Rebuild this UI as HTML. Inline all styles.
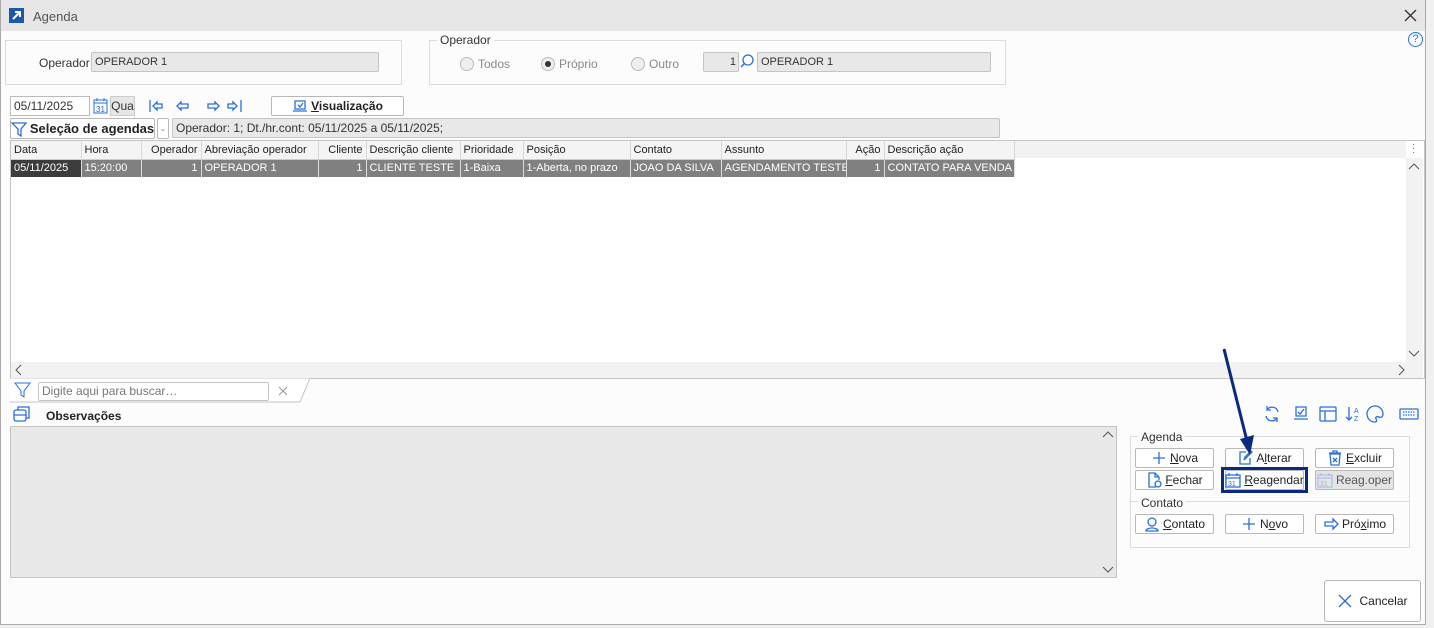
<!DOCTYPE html>
<html><head><meta charset="utf-8"><style>
*{box-sizing:border-box;margin:0;padding:0}
body{width:1434px;height:628px;background:#f0f0f0;font-family:"Liberation Sans",sans-serif;font-size:12px;color:#333;position:relative;overflow:hidden}
.a{position:absolute}
.win{left:0;top:0;width:1426px;height:625px;background:#fcfcfc;border:1px solid #aaa;border-top:none}
.title{left:1px;top:0;width:1424px;height:31px;background:#e6e6e6}
.fld{background:#e8e8e8;border:1px solid #c4c4c4;border-radius:2px;padding-left:3px;line-height:18px;font-size:11px;color:#333;white-space:nowrap;overflow:hidden}
.gb{border:1px solid #dcdcdc}
.btn{background:#fff;border:1px solid #b8b8b8;border-radius:2px;font-size:12px;color:#222;display:flex;align-items:center;justify-content:center;gap:3px;white-space:nowrap}
.btn svg{flex:none}
.rad{width:14px;height:14px;border-radius:50%;border:1px solid #bbb;background:#eee}
table{border-collapse:collapse;font-size:11px;table-layout:fixed;width:1003px}
td{height:18px;padding:0 3px;white-space:nowrap;overflow:hidden;border-right:1px solid #d8d8d8}
.h td{background:#f4f4f4;color:#222;border-bottom:1px solid #ccc}
.r td{background:#808080;color:#fff;border-right:1px solid #ddd}
.rt{text-align:right}
u{text-decoration:underline}
.ic{stroke:#2a6fdb;fill:none;stroke-width:1.3}
</style></head><body>
<div class="a win"></div>
<div class="a title"></div>
<div class="a" style="left:9px;top:8px;width:15px;height:15px;background:#1a5aa8"><svg width="15" height="15"><path d="M4 11L11 4M6 4H11V9" stroke="#fff" stroke-width="2" fill="none"/></svg></div>
<div class="a" style="left:33px;top:9px;font-size:13px;color:#555">Agenda</div>
<svg class="a" style="left:1404px;top:9px" width="13" height="13"><path d="M1 1L12 12M12 1L1 12" stroke="#333" stroke-width="1.3"/></svg>
<div class="a" style="left:1408px;top:32px;width:15px;height:15px;border:1.5px solid #2a6fdb;border-radius:50%;color:#2a6fdb;font-size:11px;text-align:center;line-height:12px">?</div>

<div class="a gb" style="left:5px;top:40px;width:397px;height:45px"></div>
<div class="a" style="left:39px;top:56px;font-size:12px">Operador</div>
<div class="a fld" style="left:91px;top:52px;width:288px;height:20px">OPERADOR 1</div>

<div class="a gb" style="left:429px;top:40px;width:577px;height:45px"></div>
<div class="a" style="left:437px;top:33px;background:#fcfcfc;padding:0 3px;font-size:12px">Operador</div>
<div class="a rad" style="left:460px;top:57px"></div><div class="a" style="left:478px;top:57px;color:#888">Todos</div>
<div class="a rad" style="left:541px;top:57px"><div style="width:6px;height:6px;background:#333;border-radius:50%;margin:3px"></div></div><div class="a" style="left:559px;top:57px;color:#888">Próprio</div>
<div class="a rad" style="left:631px;top:57px"></div><div class="a" style="left:649px;top:57px;color:#888">Outro</div>
<div class="a fld" style="left:703px;top:52px;width:36px;height:20px;text-align:right;padding-right:2px">1</div>
<svg class="a" style="left:740px;top:54px" width="15" height="15"><circle cx="8" cy="6" r="5" stroke="#2a6fdb" stroke-width="1.3" fill="none"/><path d="M4.5 9.5L1 13" stroke="#2a6fdb" stroke-width="1.5"/></svg>
<div class="a fld" style="left:757px;top:52px;width:234px;height:20px">OPERADOR 1</div>

<div class="a" style="left:10px;top:96px;width:80px;height:20px;background:#fff;border:1px solid #bbb;padding-left:3px;line-height:18px;font-size:12px">05/11/2025</div>
<svg class="a" style="left:93px;top:97px" width="16" height="18"><rect x="1" y="3" width="13" height="13" fill="none" stroke="#2a6fdb"/><path d="M1 6H14M4 1V4M11 1V4" stroke="#2a6fdb"/><text x="3" y="15" font-size="8" fill="#2a6fdb" font-family="Liberation Sans">31</text></svg>
<div class="a" style="left:110px;top:96px;width:25px;height:20px;background:#e6e6e6;border:1px solid #ccc;font-size:12px;line-height:18px;text-align:center">Qua</div>
<svg class="a" style="left:148px;top:98px" width="100" height="16">
<g class="ic"><path d="M2 2V14M5 8L9 4V6H14V10H9V12Z"/><path d="M29 8L33 4V6H40V10H33V12Z"/><path d="M71 8L67 4V6H60V10H67V12Z"/><path d="M89 8L85 4V6H80V10H85V12ZM93 2V14"/></g></svg>
<div class="a btn" style="left:271px;top:96px;width:133px;height:20px;font-weight:bold"><svg width="16" height="14"><path class="ic" d="M3 2H13V10H3ZM1 12H15M6 6L8 8L11 4"/></svg><span><u>V</u>isualização</span></div>

<div class="a btn" style="left:10px;top:118px;width:145px;height:21px;font-weight:bold;font-size:13px"><svg width="16" height="16"><path class="ic" d="M1 2H15L10 8V15L7 13V8Z"/></svg>Seleção de agendas</div>
<div class="a btn" style="left:157px;top:118px;width:12px;height:21px;font-size:8px;color:#888">⌄</div>
<div class="a fld" style="left:172px;top:118px;width:828px;height:20px;font-size:12px">Operador: 1; Dt./hr.cont: 05/11/2025 a 05/11/2025;</div>

<div class="a" style="left:10px;top:140px;width:1415px;height:239px;background:#fff;border:1px solid #c4c4c4"></div>
<div class="a" style="left:11px;top:141px;width:1395px;height:17px;background:#f2f2f2"></div>
<table class="a" style="left:11px;top:141px">
<colgroup><col style="width:70px"><col style="width:60px"><col style="width:60px"><col style="width:117px"><col style="width:48px"><col style="width:94px"><col style="width:63px"><col style="width:107px"><col style="width:91px"><col style="width:125px"><col style="width:38px"><col style="width:130px"></colgroup>
<tr class="h"><td>Data</td><td>Hora</td><td class="rt">Operador</td><td>Abreviação operador</td><td class="rt">Cliente</td><td>Descrição cliente</td><td>Prioridade</td><td>Posição</td><td>Contato</td><td>Assunto</td><td class="rt">Ação</td><td>Descrição ação</td></tr>
<tr class="r"><td style="background:#3c3c3c">05/11/2025</td><td>15:20:00</td><td class="rt">1</td><td>OPERADOR 1</td><td class="rt">1</td><td>CLIENTE TESTE</td><td>1-Baixa</td><td>1-Aberta, no prazo</td><td>JOAO DA SILVA</td><td>AGENDAMENTO TESTE</td><td class="rt">1</td><td>CONTATO PARA VENDA</td></tr>
</table>
<div class="a" style="left:1406px;top:158px;width:17px;height:204px;background:#f2f2f2"></div>
<div class="a" style="left:1412px;top:143px;color:#2a6fdb;font-size:10px;line-height:4px">·<br>·<br>·</div>
<svg class="a" style="left:1407px;top:162px" width="14" height="10"><path d="M2 7L7 2L12 7" stroke="#555" fill="none"/></svg>
<svg class="a" style="left:1407px;top:348px" width="14" height="10"><path d="M2 3L7 8L12 3" stroke="#555" fill="none"/></svg>
<div class="a" style="left:11px;top:362px;width:1412px;height:16px;background:#f2f2f2"></div>
<svg class="a" style="left:14px;top:364px" width="10" height="12"><path d="M7 1L2 6L7 11" stroke="#555" fill="none"/></svg>
<svg class="a" style="left:1396px;top:364px" width="10" height="12"><path d="M3 1L8 6L3 11" stroke="#555" fill="none"/></svg>

<svg class="a" style="left:10px;top:378px" width="300" height="25"><path d="M0 0H300L290 24H0" fill="#fff" stroke="#c4c4c4"/><path d="M5 5H20L14 13V19L11 17V13Z" stroke="#2a6fdb" fill="none"/></svg>
<div class="a" style="left:38px;top:382px;width:231px;height:19px;background:#fff;border:1px solid #c4c4c4;border-radius:2px;padding-left:3px;line-height:17px;color:#777;font-size:12px">Digite aqui para buscar…</div>
<svg class="a" style="left:278px;top:386px" width="10" height="10"><path d="M1 1L9 9M9 1L1 9" stroke="#999"/></svg>

<svg class="a" style="left:13px;top:405px" width="18" height="18"><rect x="1" y="5" width="12" height="11" rx="2" stroke="#2a6fdb" fill="none" stroke-width="1.3"/><path d="M1 10H13M5 5V2H16V13H13" stroke="#2a6fdb" fill="none" stroke-width="1.3"/></svg>
<div class="a" style="left:46px;top:409px;font-weight:bold;font-size:12px;color:#222">Observações</div>
<div class="a" style="left:10px;top:426px;width:1107px;height:152px;background:#e8e8e8;border:1px solid #c4c4c4"></div>
<svg class="a" style="left:1101px;top:430px" width="14" height="10"><path d="M2 7L7 2L12 7" stroke="#555" fill="none"/></svg>
<svg class="a" style="left:1101px;top:564px" width="14" height="10"><path d="M2 3L7 8L12 3" stroke="#555" fill="none"/></svg>

<svg class="a" style="left:1263px;top:404px" width="160" height="20"><g class="ic">
<path d="M15 8A6 6 0 0 0 4 6M3 12A6 6 0 0 0 14 14M4 2V6H8M14 18V14H10"/>
<path d="M33 3H43V12H33ZM31 15H45M35 8L37 10L41 5"/>
<rect x="57" y="3" width="16" height="14" rx="1"/><path d="M57 7H73M62 7V17"/>
<path d="M86 3V16M83 13L86 16L89 13"/><text x="91" y="9" font-size="7" fill="#2a6fdb" stroke="none" font-family="Liberation Sans">A</text><text x="91" y="17" font-size="7" fill="#2a6fdb" stroke="none" font-family="Liberation Sans">Z</text>
<path d="M120 10A8 8 0 1 0 112 18C114 18 114 16 113 15C112 13 114 12 116 13C118 14 120 13 120 10Z"/>
<rect x="137" y="5" width="18" height="10" rx="1"/><path d="M140 8H152M140 11H152" stroke-dasharray="1.5 1"/></g></svg>

<div class="a gb" style="left:1130px;top:436px;width:280px;height:112px"></div>
<div class="a" style="left:1138px;top:430px;background:#fcfcfc;padding:0 3px">Agenda</div>
<div class="a" style="left:1131px;top:501px;width:278px;border-top:1px solid #ddd"></div>
<div class="a" style="left:1138px;top:496px;background:#fcfcfc;padding:0 3px">Contato</div>
<div class="a btn" style="left:1135px;top:448px;width:79px;height:20px"><svg width="16" height="16"><path class="ic" d="M8 2V14M2 8H14"/></svg><span><u>N</u>ova</span></div>
<div class="a btn" style="left:1225px;top:448px;width:79px;height:20px"><svg width="16" height="16"><path class="ic" d="M9 2H3V14H13V8M7 10L8 7L14 1L15 2L9 8Z"/></svg><span>A<u>l</u>terar</span></div>
<div class="a btn" style="left:1315px;top:448px;width:79px;height:20px"><svg width="16" height="16"><path class="ic" d="M3 4H13L12 15H4ZM2 3H14M6 3V1H10V3M6 8L10 12M10 8L6 12"/></svg><span><u>E</u>xcluir</span></div>
<div class="a btn" style="left:1135px;top:470px;width:79px;height:20px"><svg width="16" height="16"><path class="ic" d="M10 15H3V1H9L13 5V8M9 1V5H13"/><circle class="ic" cx="12" cy="12" r="3"/></svg><span><u>F</u>echar</span></div>
<div class="a" style="left:1221px;top:467px;width:87px;height:26px;border:3px solid #0a2a80"></div>
<div class="a btn" style="left:1225px;top:470px;width:79px;height:20px"><svg width="16" height="16"><rect class="ic" x="1" y="3" width="14" height="12"/><path class="ic" d="M1 6H15M4 1V4M12 1V4"/><text x="3" y="14" font-size="7" fill="#2a6fdb" font-family="Liberation Sans">31</text></svg><span><u>R</u>eagendar</span></div>
<div class="a btn" style="left:1315px;top:470px;width:79px;height:20px;background:#e4e4e4;color:#555"><svg width="16" height="16"><rect x="1" y="3" width="14" height="12" stroke="#9bb8e8" fill="none"/><path d="M1 6H15M4 1V4M12 1V4" stroke="#9bb8e8"/><text x="3" y="14" font-size="7" fill="#9bb8e8" font-family="Liberation Sans">31</text></svg><span>Reag.oper</span></div>
<div class="a btn" style="left:1135px;top:514px;width:79px;height:20px"><svg width="16" height="16"><circle class="ic" cx="8" cy="6" r="4"/><path class="ic" d="M2 15C2 11 14 11 14 15Z"/></svg><span><u>C</u>ontato</span></div>
<div class="a btn" style="left:1225px;top:514px;width:79px;height:20px"><svg width="16" height="16"><path class="ic" d="M8 2V14M2 8H14"/></svg><span>N<u>o</u>vo</span></div>
<div class="a btn" style="left:1315px;top:514px;width:79px;height:20px"><svg width="16" height="16"><path class="ic" d="M15 8L10 3V6H2V10H10V13Z"/></svg><span>Pró<u>x</u>imo</span></div>

<svg class="a" style="left:1215px;top:345px" width="40" height="115"><path d="M9 4L33 100" stroke="#0a2a80" stroke-width="3"/><path d="M25 94L35 110L39 90Z" fill="#0a2a80"/></svg>

<div class="a btn" style="left:1324px;top:580px;width:97px;height:42px;border-radius:3px;gap:6px"><svg width="16" height="16"><path d="M2 2L14 14M14 2L2 14" stroke="#2a6fdb" stroke-width="1.3"/></svg><span>Cancelar</span></div>
</body></html>
